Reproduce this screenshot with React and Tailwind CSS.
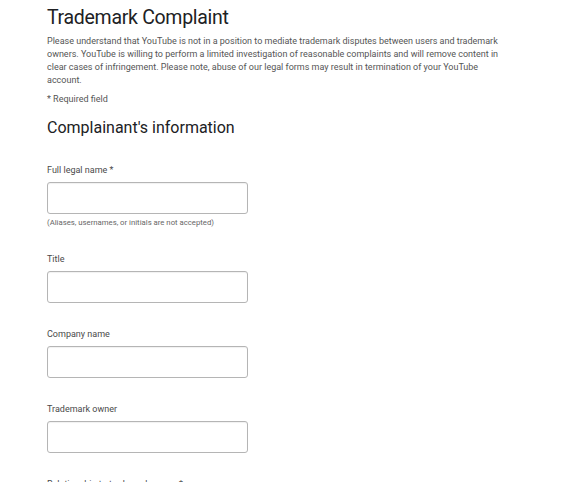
const FIELDS = [
  { label: 'Full legal name *', hint: '(Aliases, usernames, or initials are not accepted)' },
  { label: 'Title' },
  { label: 'Company name' },
  { label: 'Trademark owner' },
  { label: 'Relationship to trademark owner *' },
]

function Field({ label, hint }) {
  return (
    <div className="mb-[25px]">
      <label className="block text-[9px] leading-[12px] text-[#4a4a4a]">{label}</label>
      <input
        type="text"
        className="mt-[6px] block w-[201px] h-[32px] rounded-[3px] border border-[#b5b5b5] bg-white outline-none shadow-[inset_0_1px_1px_rgba(0,0,0,0.06)]"
      />
      {hint && <p className="mt-[4px] mb-[3px] text-[7.75px] leading-[10px] text-[#666]">{hint}</p>}
    </div>
  )
}

export default function App() {
  return (
    <div className="min-h-screen bg-white pl-[47px] pr-[40px] pt-[4px] font-['Roboto',sans-serif]">
      <h1 className="text-[19.5px] leading-[28px] tracking-[-0.3px] text-[#202124]">Trademark Complaint</h1>
      <p className="mt-[3px] w-[456px] text-[9px] leading-[13px] text-[#555]">
        Please understand that YouTube is not in a position to mediate trademark disputes between users and trademark
        owners. YouTube is willing to perform a limited investigation of reasonable complaints and will remove content in
        clear cases of infringement. Please note, abuse of our legal forms may result in termination of your YouTube
        account.
      </p>
      <p className="mt-[6px] text-[9px] leading-[12px] text-[#555]">* Required field</p>
      <h2 className="mt-[13px] text-[16px] leading-[20px] text-[#202124]">Complainant's information</h2>
      <div className="mt-[26px]">
        {FIELDS.map((f) => (
          <Field key={f.label} {...f} />
        ))}
      </div>
    </div>
  )
}
